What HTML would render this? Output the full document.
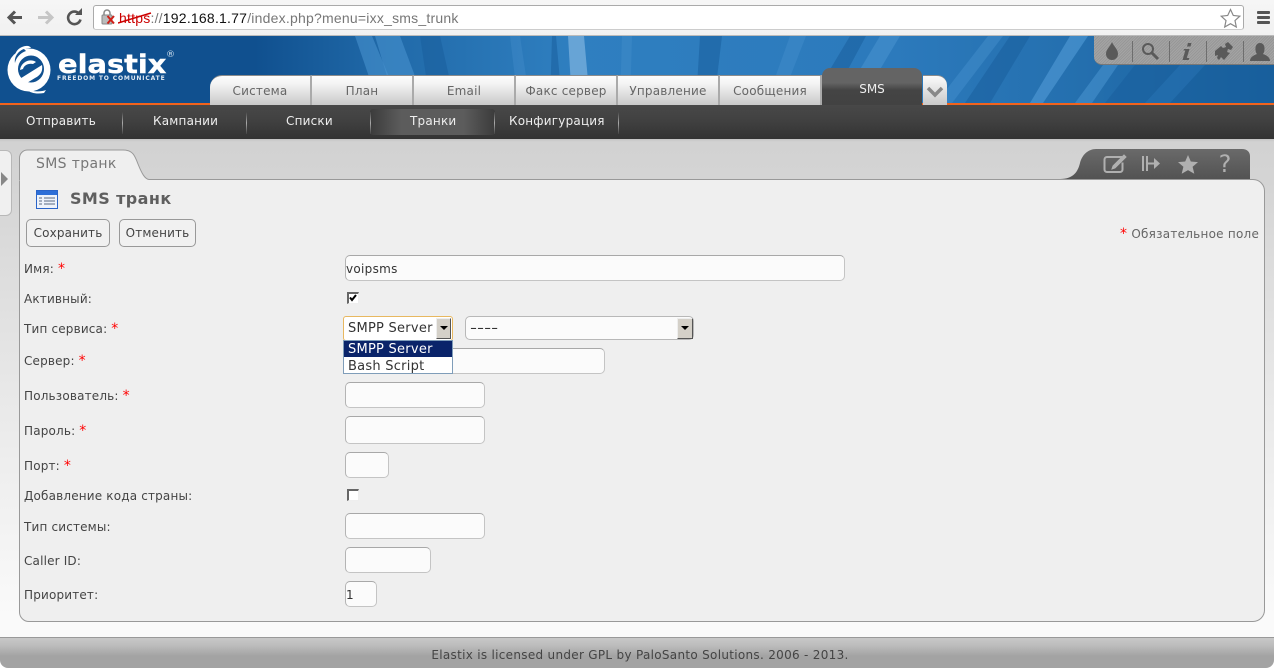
<!DOCTYPE html>
<html><head><meta charset="utf-8"><title>SMS</title>
<style>
html,body{margin:0;padding:0}
body{width:1274px;height:668px;overflow:hidden;position:relative;background:#fff;font:12px/14px "DejaVu Sans","Liberation Sans",sans-serif;color:#444}
div,span.a,a{position:absolute}
.t{white-space:nowrap;line-height:14px}
.r{color:#f00;font-size:14px;line-height:10px}
.tab{top:75px;height:30px;width:100px;background:linear-gradient(#fdfdfd 0,#f4f4f4 25%,#c9c9c9 100%);border-top:1px solid #8c8c8c;border-right:2px solid #aaa;box-sizing:border-box;color:#666;text-align:center;font-size:12px;letter-spacing:.2px;line-height:30px;white-space:nowrap}
.m{top:114px;color:#eee;font-size:12px;letter-spacing:.2px;white-space:nowrap;line-height:14px}
.sep{top:112px;width:1px;height:22px;background:linear-gradient(#444,#aaa 50%,#444)}
.in{background:#fbfbfb;border:1px solid #c4c4c4;border-top-color:#a8a8a8;border-left-color:#b4b4b4;border-radius:5px;box-sizing:border-box;left:345px;font-size:12px;letter-spacing:.3px;color:#333;line-height:26px;padding-left:0}
.btn{top:219px;height:28px;border:1px solid #999;border-radius:5px;box-sizing:border-box;background:#f1f1f1;color:#444;text-align:center;line-height:27px;font-size:12px;letter-spacing:.15px}
.l{left:24px;color:#444;font-size:12px;letter-spacing:.17px;white-space:nowrap;line-height:14px}
.ar{background:#d4d0c8;border:1px solid;border-color:#eee #555 #555 #eee;box-sizing:border-box}
.ar:after{content:"";position:absolute;left:3px;top:7px;border:4px solid transparent;border-top:4px solid #000;border-bottom:0}
.cb{left:347px;width:12px;height:12px;background:#fff;border:solid;border-width:2px 1px 1px 2px;border-color:#666 #eee #eee #666;box-sizing:border-box}
.o{font-size:13px;letter-spacing:.25px}
</style></head><body>

<!-- browser bar -->
<div style="left:0;top:0;width:1274px;height:36px;background:linear-gradient(#f6f6f6,#f1f1f1);border-bottom:1px solid #bbb;box-sizing:border-box"></div>
<svg style="position:absolute;left:0;top:0" width="94" height="36">
<path d="M9 17.500h13M15 11.500l-6 6 6 6" fill="none" stroke="#555" stroke-width="3"/>
<path d="M38 17.500h13M46 11.500l6 6-6 6" fill="none" stroke="#c6c6c6" stroke-width="3"/>
<path d="M79 13.500a6.300 6.300 0 1 0 1.500 6" fill="none" stroke="#555" stroke-width="2.600"/>
<path d="M75 15h7v-7z" fill="#555"/>
</svg>
<div style="left:93px;top:5px;width:1151px;height:25px;background:#fff;border:1px solid #aaa;border-bottom-color:#ccc;border-radius:3px;box-sizing:border-box"></div>
<svg style="position:absolute;left:100px;top:9px" width="20" height="18">
<rect x="2" y="6" width="10" height="9" rx="1" fill="#bbb" stroke="#888"/>
<path d="M4 6V4a3 3 0 0 1 6 0v2" fill="none" stroke="#888" stroke-width="1.500"/>
<path d="M7.500 7l6.500 7.500M14 7l-6.500 7.500" stroke="#d02018" stroke-width="2"/>
</svg>
<div class="t" style="left:119px;top:11px;font-family:'Liberation Sans',sans-serif;font-size:14px;letter-spacing:.22px;color:#777"><span style="color:#c00">https</span>://<span style="color:#111">192.168.1.77</span>/index.php?menu=ixx_sms_trunk</div>
<svg style="position:absolute;left:118px;top:11px" width="36" height="14"><path d="M0 12L33 2" stroke="#c00" stroke-width="1.500"/></svg>
<svg style="position:absolute;left:1220px;top:8px" width="22" height="20"><path d="M10.500 1.500l2.800 6 6.500.7-4.800 4.400 1.300 6.400-5.800-3.300-5.800 3.300 1.300-6.400L1.200 8.200l6.500-.7z" fill="#fff" stroke="#888" stroke-width="1.200"/></svg>
<div style="left:1257px;top:11px;width:13px;height:3px;background:#555;border-radius:1px"></div>
<div style="left:1257px;top:16px;width:13px;height:3px;background:#555;border-radius:1px"></div>
<div style="left:1257px;top:21px;width:13px;height:3px;background:#555;border-radius:1px"></div>

<!-- header -->
<svg style="position:absolute;left:0;top:36px" width="1274" height="67">
<defs><linearGradient id="bg" x1="0" x2="1" y1="0" y2="0">
<stop offset="0" stop-color="#10508f"/><stop offset=".2" stop-color="#10508f"/><stop offset=".3" stop-color="#2069a8"/><stop offset=".45" stop-color="#2f7fc0"/><stop offset=".7" stop-color="#2c7abc"/><stop offset=".85" stop-color="#246fae"/><stop offset="1" stop-color="#17609c"/></linearGradient></defs>
<rect width="1274" height="67" fill="url(#bg)"/>
<g fill="#4b95d1" fill-opacity=".55">
<polygon points="355,0 372,0 400,67 378,67"/>
<polygon points="375,0 400,0 425,67 395,67"/>
<polygon points="510,0 520,0 530,67 518,67" fill-opacity=".3"/>
<polygon points="568,0 584,0 590,67 572,67" fill="#7fb4e0" fill-opacity=".7"/>
<polygon points="622,0 632,0 630,67 620,67" fill-opacity=".3"/>
<polygon points="790,0 806,0 780,67 766,67" fill-opacity=".35"/>
<polygon points="880,0 900,0 860,67 840,67" fill-opacity=".5"/>
<polygon points="988,0 1003,0 952,67 936,67" fill-opacity=".4"/>
<polygon points="1070,0 1088,0 1043,67 1030,67" fill-opacity=".7"/>
<polygon points="1103,29 1118,29 1092,67 1075,67" fill-opacity=".55"/>
</g>
<g fill="#1a5f9c" fill-opacity=".55">
<polygon points="420,0 440,0 455,67 430,67"/>
<polygon points="552,0 556,0 562,67 550,67"/>
<polygon points="700,0 722,0 714,67 696,67"/>
<polygon points="850,0 866,0 830,67 810,67"/>
<polygon points="1010,0 1030,0 990,67 965,67"/>
<polygon points="1135,29 1274,29 1274,67 1105,67"/>
</g>
<polygon points="1180,29 1205,29 1170,67 1145,67" fill="#2c7abc" fill-opacity=".4"/>
</svg>
<!-- logo -->
<svg style="position:absolute;left:0;top:40px" width="60" height="60">
<ellipse cx="29" cy="30" rx="21.500" ry="21.500" fill="#fff"/>
<path d="M22 7c5-2 8-1 9 1-7 0-14 5-16 11-1-5 2-10 7-12z" fill="#fff"/>
<path d="M24 9c-6 2-10 8-9 14 1-5 5-10 11-12z" fill="#10508f"/>
<ellipse cx="31" cy="29" rx="13" ry="13.500" fill="#10508f"/>
<path d="M18 40l24-15c1 6-1 10-7 13l-13 8z" fill="#fff"/>
<path d="M20 30c1-8 10-12 16-8l-3 2c-4-1-9 1-10 5z" fill="#fff"/>
<path d="M26 49c7 3 15 3 20 1l-2 3c-6 1-13 1-18-4z" fill="#fff"/>
</svg>
<div class="t" style="left:58px;top:50px;color:#fff;font:bold 26px/30px 'DejaVu Sans',sans-serif;transform-origin:0 0;transform:scaleX(1.11);letter-spacing:0;-webkit-text-stroke:.4px #fff">elastix</div>
<div class="t" style="left:57px;top:75px;color:#dfe9f3;font:bold 6px/8px 'DejaVu Sans',sans-serif;letter-spacing:.85px">FREEDOM TO COMUNICATE</div>
<div class="t" style="left:166px;top:50px;color:#cfe0ee;font:9px/10px 'DejaVu Sans',sans-serif">®</div>

<!-- top right tools -->
<div style="left:1094px;top:36px;width:180px;height:28px;border-radius:0 0 0 8px;background:repeating-linear-gradient(135deg,#a4a4a4 0,#a4a4a4 1px,#979797 1px,#979797 2px);border-bottom:1px solid #777;box-sizing:content-box"></div>
<svg style="position:absolute;left:1094px;top:36px" width="180" height="30" fill="#5a5a5a">
<path d="M18 6c2 5 6 7 6 12a6 6 0 0 1-12 0c0-5 4-7 6-12z"/>
<circle cx="54" cy="13" r="5" fill="none" stroke="#5a5a5a" stroke-width="2"/>
<path d="M58 17l6 6" stroke="#5a5a5a" stroke-width="3"/>
<path d="M94 7h3.500l-1 3.500h-3.500zM90 13h5.500l-2.700 9h2.500l-.6 2h-6.200l2.800-9.500h-1.800z"/>
<path d="M121 15l6-5 2 2 3-1-1-3 3-2 5 5-2 3-3-1-1 3 3 1-6 7-3-3-2 3-2-2 1-3-3 1z"/>
<path d="M156 24c1-4 5-5 7-6-2-2-3-11 3-11s5 9 3 11c2 1 6 2 7 6v1h-20z"/>
<g fill="#6e6e6e"><rect x="38" y="5" width="1" height="21"/><rect x="75" y="5" width="1" height="21"/><rect x="112" y="5" width="1" height="21"/><rect x="149" y="5" width="1" height="21"/></g>
</svg>

<!-- orange + tabs -->
<div style="left:0;top:103px;width:1274px;height:2px;background:#f2631c"></div>
<div class="tab" style="left:210px;width:102px;border-top-left-radius:12px">Система</div>
<div class="tab" style="left:312px;width:102px">План</div>
<div class="tab" style="left:414px;width:102px">Email</div>
<div class="tab" style="left:516px;width:102px">Факс сервер</div>
<div class="tab" style="left:618px;width:102px">Управление</div>
<div class="tab" style="left:720px;width:102px">Сообщения</div>
<div style="left:822px;top:68px;width:100px;height:37px;border-radius:8px 8px 0 0;background:linear-gradient(#646464 0,#646464 40%,#444 60%,#424242 100%);color:#eee;text-align:center;line-height:43px;font-size:12px">SMS</div>
<div style="left:923px;top:75px;width:24px;height:30px;border-radius:0 10px 0 0;background:linear-gradient(#fbfbfb,#c9c9c9);border-top:1px solid #8c8c8c;box-sizing:border-box"></div>
<svg style="position:absolute;left:923px;top:84px" width="24" height="16"><path d="M5 4l7 7 7-7" fill="none" stroke="#888" stroke-width="3.500"/></svg>

<!-- menu bar -->
<div style="left:0;top:105px;width:1274px;height:34px;background:linear-gradient(#484848,#424242 40%,#333)"></div>
<div style="left:370px;top:109px;width:125px;height:26px;background:linear-gradient(90deg,#3b3b3b,#5c5c5c 25%,#5c5c5c 75%,#3b3b3b);border-radius:3px"></div>
<div class="m" style="left:26px">Отправить</div>
<div class="m" style="left:153px">Кампании</div>
<div class="m" style="left:286px">Списки</div>
<div class="m" style="left:410px">Транки</div>
<div class="m" style="left:509px">Конфигурация</div>
<div class="sep" style="left:122px"></div><div class="sep" style="left:246px"></div><div class="sep" style="left:370px"></div><div class="sep" style="left:494px"></div><div class="sep" style="left:618px"></div>

<!-- content bg -->
<div style="left:0;top:139px;width:1274px;height:498px;background:linear-gradient(#c4c4c4 0,#d2d2d2 3px,#d4d4d4 40px,#e8e8e8 250px,#fafafa 480px)"></div>
<!-- left toggler -->
<div style="left:-8px;top:150px;width:20px;height:66px;background:#f0f0f0;border:1px solid #b8b8b8;border-radius:6px;box-sizing:border-box"></div>
<svg style="position:absolute;left:0;top:171px" width="10" height="16"><path d="M1 1l7 7-7 7z" fill="#888"/></svg>

<!-- tab right icons shape -->
<svg style="position:absolute;left:1060px;top:149px" width="192" height="32">
<defs><linearGradient id="dk" x1="0" x2="0" y1="0" y2="1"><stop offset="0" stop-color="#6a6a6a"/><stop offset="1" stop-color="#525252"/></linearGradient></defs>
<path d="M0 30c14 0 18-8 20-16 2-8 8-14 16-14h146c5 0 8 3 8 7v24H0z" fill="url(#dk)"/>
<g fill="none" stroke="#b0b0b0" stroke-width="2">
<path d="M62 8H47a2.500 2.500 0 0 0-2.500 2.500v10a2.500 2.500 0 0 0 2.500 2.500h13a2.500 2.500 0 0 0 2.500-2.500v-7"/>
<path d="M53 17l11-11 2 2-11 11-3 1z" fill="#b0b0b0" stroke-width="1"/>
<path d="M83 7v15M87 7v15M88 14.500h8"/>
<path d="M94 9l6 5.500-6 5.500z" fill="#b0b0b0" stroke="none"/>
</g>
<path d="M128 6l2.800 6.500 7.200.6-5.400 4.700 1.700 7-6.300-3.700-6.300 3.700 1.700-7-5.400-4.700 7.200-.6z" fill="#b0b0b0"/>
<text x="165" y="23" font-family="'DejaVu Sans',sans-serif" font-size="24" fill="#b0b0b0" text-anchor="middle">?</text>
</svg>

<!-- panel -->
<div style="left:19px;top:179px;width:1246px;height:443px;background:#efefef;border:1px solid #999;border-radius:0 12px 12px 10px;box-sizing:border-box"></div>
<svg style="position:absolute;left:19px;top:148px" width="130" height="33">
<path d="M.5 32V10a8 8 0 0 1 8-8H104c10 0 12 6 15 14 4 10 7 15 11 15.500L130 33H1z" fill="#efefef"/>
<path d="M.5 32V10a8 8 0 0 1 8-8H104c10 0 12 6 15 14 4 10 7 15 11 15.500" fill="none" stroke="#999"/>
</svg>
<div class="t" style="left:36px;top:157px;font-size:14px;letter-spacing:.35px;color:#777">SMS транк</div>
<svg style="position:absolute;left:36px;top:190px" width="22" height="19">
<rect x=".5" y=".5" width="21" height="18" fill="#eef3fb" stroke="#2a64c8"/>
<rect x="1" y="1" width="20" height="4" fill="#2d6fd8"/>
<g stroke="#5a6a80"><path d="M3 8h3M8 8h11M3 11h3M8 11h11M3 14h3M8 14h11"/></g>
</svg>
<div class="t" style="left:70px;top:190px;font:bold 16px/17px 'DejaVu Sans',sans-serif;letter-spacing:.4px;color:#5f5f5f">SMS транк</div>

<div class="btn" style="left:26px;width:84px">Сохранить</div>
<div class="btn" style="left:119px;width:77px">Отменить</div>
<div class="t" style="left:1120px;top:227px;font-size:12px;letter-spacing:.25px;color:#666"><span class="r">*</span> Обязательное поле</div>

<div class="l" style="top:262px">Имя: <span class="r">*</span></div>
<div class="l" style="top:292px">Активный:</div>
<div class="l" style="top:322px">Тип сервиса: <span class="r">*</span></div>
<div class="l" style="top:354px">Сервер: <span class="r">*</span></div>
<div class="l" style="top:389px">Пользователь: <span class="r">*</span></div>
<div class="l" style="top:424px">Пароль: <span class="r">*</span></div>
<div class="l" style="top:459px">Порт: <span class="r">*</span></div>
<div class="l" style="top:489px">Добавление кода страны:</div>
<div class="l" style="top:520px">Тип системы:</div>
<div class="l" style="top:554px">Caller ID:</div>
<div class="l" style="top:588px">Приоритет:</div>

<div class="in" style="top:255px;width:500px;height:26px">voipsms</div>
<div class="cb" style="top:292px"></div>
<svg style="position:absolute;left:347px;top:292px" width="12" height="12"><path d="M3 5.500l2 2.500 4-5" fill="none" stroke="#000" stroke-width="2"/></svg>

<div class="in" style="top:348px;width:260px;height:26px"></div>
<div class="in" style="top:382px;width:140px;height:26px"></div>
<div class="in" style="top:416px;width:140px;height:28px"></div>
<div class="in" style="top:452px;width:44px;height:26px"></div>
<div class="cb" style="top:489px"></div>
<div class="in" style="top:513px;width:140px;height:26px"></div>
<div class="in" style="top:547px;width:86px;height:26px"></div>
<div class="in" style="top:581px;width:32px;height:26px">1</div>

<!-- select 1 -->
<div style="left:343px;top:316px;width:110px;height:25px;background:#fff;border:1px solid #e8b860;border-radius:3px;box-sizing:border-box"></div>
<div class="t o" style="left:348px;top:322px;color:#333">SMPP Server</div>
<div class="ar" style="left:436px;top:318px;width:15px;height:21px"></div>
<!-- select 2 -->
<div style="left:465px;top:316px;width:229px;height:24px;background:#fbfbfb;border:1px solid #b8b8b8;border-radius:5px;box-sizing:border-box"></div>
<div class="t" style="left:470px;top:322px;font-size:13px;color:#333;transform-origin:0 0;transform:scaleX(1.5)">----</div>
<div class="ar" style="left:677px;top:318px;width:16px;height:21px"></div>
<!-- dropdown -->
<div style="left:343px;top:340px;width:110px;height:34px;background:#fff;border:1px solid #7f9db9;box-sizing:border-box"></div>
<div class="t o" style="left:344px;top:341px;width:108px;height:16px;line-height:18px;background:#0a246a;color:#fff;text-indent:4px;overflow:hidden">SMPP Server</div>
<div class="t o" style="left:348px;top:360px;color:#333">Bash Script</div>

<!-- footer -->
<div style="left:0;top:637px;width:1274px;height:31px;background:linear-gradient(#c8c8c8,#bcbcbc 25%,#a3a3a3 60%,#a3a3a3);border-top:1px solid #999;border-radius:0 0 8px 8px;box-sizing:border-box"></div>
<div class="t" style="left:0;top:648px;width:1280px;text-align:center;color:#444;font-size:12px;letter-spacing:.3px">Elastix is licensed under GPL by PaloSanto Solutions. 2006 - 2013.</div>
</body></html>
